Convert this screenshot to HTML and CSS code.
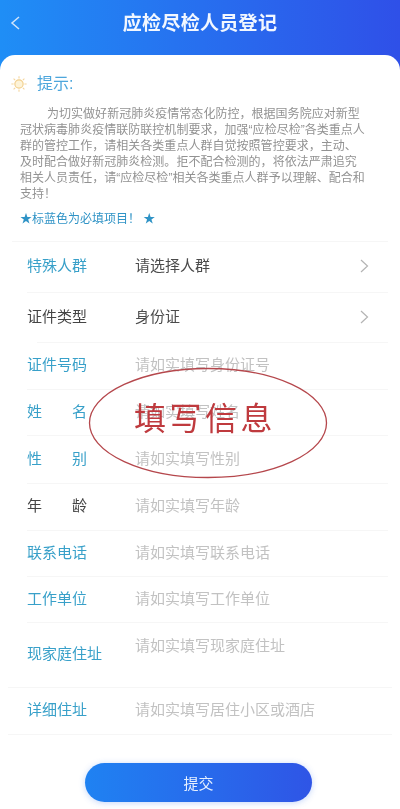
FILE: index.html
```html
<!DOCTYPE html>
<html lang="zh-CN">
<head>
<meta charset="utf-8">
<title>应检尽检人员登记</title>
<link rel="stylesheet" href="styles.css">
</head>
<body>
<div class="app">
  <header class="topbar">
    <svg class="back" viewBox="0 0 12 16" width="12" height="16"><path d="M10 2 L3 8 L10 14" fill="none" stroke="#cfe4fb" stroke-width="1.5"/></svg>
    <h1 class="title">应检尽检人员登记</h1>
  </header>
  <main class="card">
    <div class="tip-head">
      <svg class="bulb" viewBox="0 0 20 20" width="18" height="18">
        <circle cx="10" cy="10" r="4.6" fill="#fdf3d8" stroke="#f2cf8c" stroke-width="1.3"/>
        <path d="M10 1.500V4M10 16v2.500M1.500 10H4M16 10h2.500M4 4l1.700 1.700M16 4l-1.700 1.700M4 16l1.700-1.700M16 16l-1.700-1.700" stroke="#f4d59c" stroke-width="1.200" fill="none"/>
      </svg>
      <span class="tip-title">提示:</span>
    </div>
    <p class="notice">
      <span class="first">为切实做好新冠肺炎疫情常态化防控，根据国务院应对新型</span><br>冠状病毒肺炎疫情联防联控机制要求，加强“应检尽检”各类重点人<br>群的管控工作，请相关各类重点人群自觉按照管控要求，主动、<br>及时配合做好新冠肺炎检测。拒不配合检测的，将依法严肃追究<br>相关人员责任，请“应检尽检”相关各类重点人群予以理解、配合和<br>支持！
    </p>
    <p class="required-note">★标蓝色为必填项目！ ★</p>
    <div class="form">
      <div class="row row-select row-first"><span class="label req">特殊人群</span><span class="value">请选择人群</span><svg class="chev" viewBox="0 0 10 16" width="10" height="16"><path d="M2 2 L8.500 8 L2 14" fill="none" stroke="#b4b4b4" stroke-width="1.200"/></svg></div>
      <div class="row row-select row-short"><span class="label">证件类型</span><span class="value">身份证</span><svg class="chev" viewBox="0 0 10 16" width="10" height="16"><path d="M2 2 L8.500 8 L2 14" fill="none" stroke="#b4b4b4" stroke-width="1.200"/></svg></div>
      <div class="row"><span class="label req">证件号码</span><span class="ph">请如实填写身份证号</span></div>
      <div class="row row-46"><span class="label req pair"><i>姓</i><i>名</i></span><span class="ph">请如实填写姓名</span></div>
      <div class="row row-48"><span class="label req pair"><i>性</i><i>别</i></span><span class="ph">请如实填写性别</span></div>
      <div class="row"><span class="label pair"><i>年</i><i>龄</i></span><span class="ph">请如实填写年龄</span></div>
      <div class="row row-46"><span class="label req">联系电话</span><span class="ph">请如实填写联系电话</span></div>
      <div class="row row-46"><span class="label req">工作单位</span><span class="ph">请如实填写工作单位</span></div>
      <div class="row row-tall"><span class="label req">现家庭住址</span><span class="ph ph-top">请如实填写现家庭住址</span></div>
      <div class="row row-last"><span class="label req">详细住址</span><span class="ph">请如实填写居住小区或酒店</span></div>
    </div>
    <div class="actions"><button class="submit" type="button">提交</button></div>
  </main>
  <div class="stamp">
    <svg class="ring" viewBox="0 0 242 114" width="242" height="114"><ellipse cx="121" cy="57" rx="118.500" ry="54.500" fill="none" stroke="#b5474c" stroke-width="1.300"/></svg>
    <span class="stamp-text">填写信息</span>
  </div>
</div>
</body>
</html>
```
FILE: styles.css
```css
* { box-sizing: border-box; }
html, body { margin: 0; padding: 0; }
body {
  width: 400px;
  height: 809px;
  overflow: hidden;
  background: #fff;
  font-family: "Liberation Sans", "Noto Sans CJK SC", sans-serif;
}
.app {
  position: relative;
  width: 400px;
  height: 809px;
  background: linear-gradient(90deg, #1f8ef6 0%, #2f50e8 100%);
  filter: blur(0.45px);
}
.topbar {
  height: 55px;
  display: flex;
  align-items: flex-start;
  justify-content: center;
  position: relative;
  padding-top: 10px;
}
.back { position: absolute; left: 9px; top: 15px; }
.title {
  margin: 0;
  color: #f2f7ff;
  font-size: 19px;
  line-height: 28px;
  font-weight: 700;
  letter-spacing: 0.3px;
}
.card {
  height: 754px;
  background: #fff;
  border-radius: 15px 15px 0 0;
  padding-top: 19px;
}
.tip-head {
  display: flex;
  align-items: center;
  height: 20px;
  padding-left: 10px;
  gap: 9px;
}
.tip-title { color: #4da6dc; font-size: 16px; line-height: 20px; }
.notice {
  margin: 12px 0 0;
  padding-left: 20px;
  color: #929292;
  font-size: 12px;
  line-height: 16px;
  white-space: nowrap;
  letter-spacing: 0.03px;
}
.first { padding-left: 27px; }
.required-note {
  margin: 8px 0 0;
  padding-left: 20px;
  color: #2f93c6;
  font-size: 12px;
  line-height: 18px;
}
.form { margin-top: 13px; }
.row {
  height: 47px;
  display: flex;
  align-items: center;
  position: relative;
  border-top: 1px solid #f6f6f6;
  margin-left: 27px;
  margin-right: 12px;
  padding: 0 15px 2px 0;
  font-size: 15px;
}
.row-46 { height: 46px; }
.row-48 { height: 48px; }
.row-select { height: 50px; padding-right: 20px; }
.row-first { height: 51px; margin-left: 12px; padding-left: 15px; }
.row-short + .row { margin-left: 37px; }
.row-short + .row .label { margin-left: -10px; }
.row-tall { height: 65px; }
.row-last {
  height: 48px;
  border-bottom: 1px solid #f6f6f6;
  margin-left: 8px;
  margin-right: 8px;
  padding-left: 19px;
  padding-right: 19px;
}
.label {
  flex: 0 0 108px;
  color: #444;
  line-height: 20px;
  white-space: nowrap;
}
.req { color: #38a0c9; }
.pair { display: flex; }
.pair i { font-style: normal; width: 45px; }
.pair i:last-child { width: 15px; }
.value { flex: 1; color: #4b4b4b; line-height: 20px; }
.ph { flex: 1; color: #c2c2c2; line-height: 20px; }
.ph-top { align-self: flex-start; margin-top: 13px; }
.chev { margin-right: -1px; }
.actions { display: flex; justify-content: center; margin-top: 28px; padding-right: 3px; }
.submit {
  width: 227px;
  height: 39px;
  border: 0;
  border-radius: 20px;
  background: linear-gradient(90deg, #1f82f2 0%, #2f55e6 100%);
  box-shadow: 0 1px 6px rgba(60, 120, 240, 0.3);
  color: #e6f0ff;
  font: 15px "Liberation Sans", "Noto Sans CJK SC", sans-serif;
  padding: 0;
}
.stamp {
  position: absolute;
  left: 87px;
  top: 366px;
  width: 242px;
  height: 114px;
}
.ring { position: absolute; left: 0; top: 0; }
.stamp-text {
  position: absolute;
  left: 47px;
  top: 27px;
  color: #bf3a3e;
  font-size: 32px;
  line-height: 46px;
  letter-spacing: 3.5px;
  white-space: nowrap;
  font-family: "Noto Sans CJK SC", sans-serif;
  font-weight: 400;
}
```
